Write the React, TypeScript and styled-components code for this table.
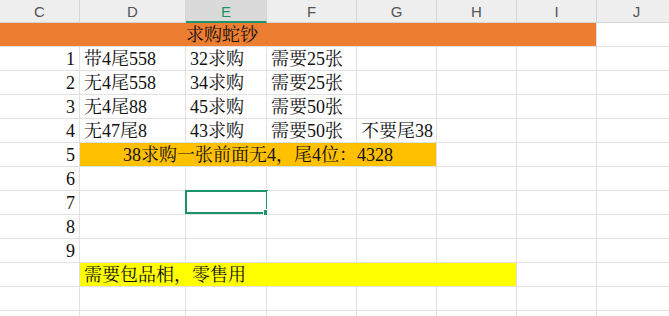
import React from "react";
import styled, { createGlobalStyle, css } from "styled-components";

const Global = createGlobalStyle`
  html, body { margin: 0; padding: 0; background: #ffffff; overflow: hidden; }
  * { box-sizing: border-box; }
`;

const GRID = "#e1e1e1";
const GREEN = "#1a9468";

const Viewport = styled.div`
  width: 669px;
  height: 316px;
  overflow: hidden;
  background: #fff;
`;

const Sheet = styled.div`
  display: grid;
  grid-template-columns: 80px 106px 81px 90px 80px 80px 80px 80px;
  grid-template-rows: 23px;
  grid-auto-rows: 24px;
  width: 677px;
`;

const ColHeader = styled.div<{ $active?: boolean }>`
  display: flex;
  align-items: center;
  justify-content: center;
  background: ${(p) => (p.$active ? "#dadada" : "#eeeeee")};
  border-right: 1px solid #d6d6d6;
  border-bottom: ${(p) => (p.$active ? `2px solid ${GREEN}` : "1px solid #d6d6d6")};
  font-family: "Liberation Sans", Arial, sans-serif;
  font-size: 15px;
  color: ${(p) => (p.$active ? GREEN : "#555555")};
  padding-top: 1px;
`;

type Fill = "none" | "orange" | "gold" | "yellow";
const fills: Record<Fill, string> = {
  none: "#ffffff",
  orange: "#ed7d31",
  gold: "#ffc000",
  yellow: "#ffff00",
};

const Cell = styled.div<{ $fill?: Fill; $span?: number; $align?: "left" | "right" | "center"; $indent?: number }>`
  position: relative;
  display: flex;
  align-items: center;
  justify-content: ${(p) =>
    p.$align === "right" ? "flex-end" : p.$align === "center" ? "center" : "flex-start"};
  padding: 0 4px 0 ${(p) => 4 + (p.$indent ?? 0)}px;
  background: ${(p) => fills[p.$fill ?? "none"]};
  border-right: 1px solid ${GRID};
  border-bottom: 1px solid ${GRID};
  ${(p) =>
    p.$span &&
    css`
      grid-column: span ${p.$span};
    `}
  font-family: "Liberation Serif", "Noto Serif CJK SC", "Noto Sans CJK SC", serif;
  font-size: 18px;
  color: #111111;
  white-space: nowrap;
  overflow: visible;
  line-height: 1;
`;

const Selection = styled.div`
  position: absolute;
  left: -1px;
  top: -1px;
  right: -2px;
  bottom: 0px;
  border: 2px solid ${GREEN};
  pointer-events: none;
`;

const Handle = styled.div`
  position: absolute;
  right: -4px;
  bottom: -4px;
  width: 6px;
  height: 6px;
  background: ${GREEN};
  border: 1px solid #ffffff;
  box-sizing: content-box;
  margin: -1px;
`;

const columns = ["C", "D", "E", "F", "G", "H", "I", "J"];

type Row = { num?: string; cells: (string | undefined)[] };

const dataRows: Row[] = [
  { num: "1", cells: ["带4尾558", "32求购", "需要25张"] },
  { num: "2", cells: ["无4尾558", "34求购", "需要25张"] },
  { num: "3", cells: ["无4尾88", "45求购", "需要50张"] },
  { num: "4", cells: ["无47尾8", "43求购", "需要50张", "不要尾38"] },
];

const Empty = ({ n }: { n: number }) => (
  <>
    {Array.from({ length: n }).map((_, i) => (
      <Cell key={i} />
    ))}
  </>
);

export default function App() {
  return (
    <>
      <Global />
      <Viewport>
        <Sheet>
          {columns.map((c) => (
            <ColHeader key={c} $active={c === "E"}>
              {c}
            </ColHeader>
          ))}

          <Cell $fill="orange" $span={7} $indent={182}>
            求购蛇钞
          </Cell>
          <Cell />

          {dataRows.map((r) => (
            <React.Fragment key={r.num}>
              <Cell $align="right">{r.num}</Cell>
              {Array.from({ length: 7 }).map((_, i) => (
                <Cell key={i}>{r.cells[i]}</Cell>
              ))}
            </React.Fragment>
          ))}

          <Cell $align="right">5</Cell>
          <Cell $fill="gold" $span={4} $align="center">
            38求购一张前面无4，尾4位：4328
          </Cell>
          <Empty n={3} />

          <Cell $align="right">6</Cell>
          <Empty n={7} />

          <Cell $align="right">7</Cell>
          <Cell />
          <Cell>
            <Selection>
              <Handle />
            </Selection>
          </Cell>
          <Empty n={5} />

          <Cell $align="right">8</Cell>
          <Empty n={7} />

          <Cell $align="right">9</Cell>
          <Empty n={7} />

          <Cell />
          <Cell $fill="yellow" $span={5}>
            需要包品相，零售用
          </Cell>
          <Empty n={2} />

          <Empty n={8} />
          <Empty n={8} />
        </Sheet>
      </Viewport>
    </>
  );
}
